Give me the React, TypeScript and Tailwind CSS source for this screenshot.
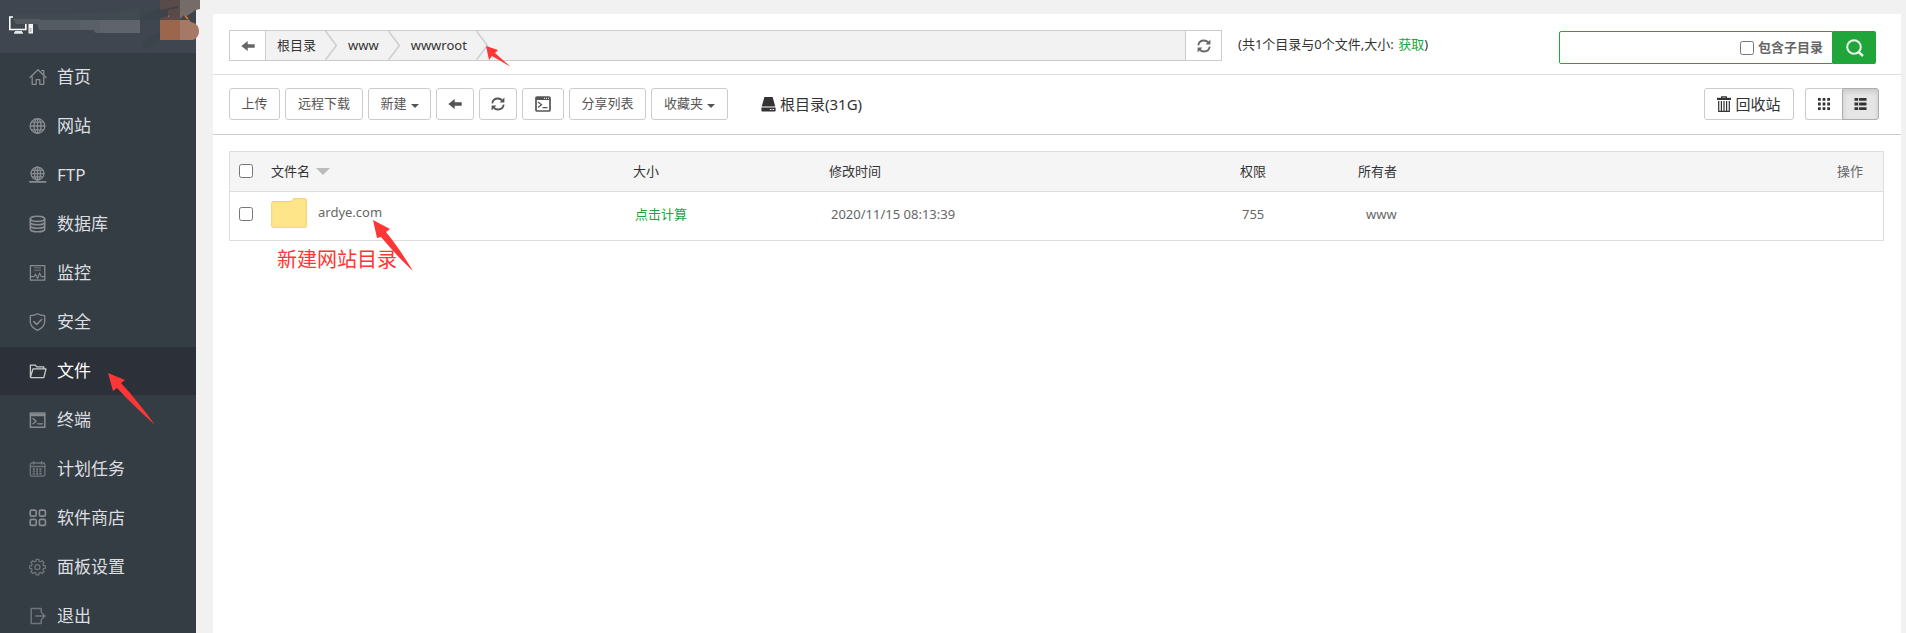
import React from "react";

const FONT = "font-['Noto_Sans','Noto_Sans_CJK_SC',sans-serif]";

type IconProps = { className?: string };

const line = {
  fill: "none",
  stroke: "currentColor",
  strokeWidth: 1.3,
  strokeLinecap: "round" as const,
  strokeLinejoin: "round" as const,
};

const menu: { label: string; dim?: boolean; active?: boolean; icon: React.ReactNode }[] = [
  {
    label: "首页",
    icon: <path {...line} d="M1 9.5 9 1.8l8 7.7M3.2 9v7.3h4v-4.6h3.6v4.6h4V9M12.6 2.6h2.2v3.6" />,
  },
  {
    label: "网站",
    icon: (
      <g {...line}>
        <circle cx="8.5" cy="9" r="7.3" />
        <ellipse cx="8.5" cy="9" rx="3.5" ry="7.3" />
        <path d="M8.5 1.7v14.6M1.2 9h14.6M2.4 5.2h12.2M2.4 12.8h12.2" />
      </g>
    ),
  },
  {
    label: "FTP",
    icon: (
      <g {...line}>
        <circle cx="8.5" cy="7.6" r="6.4" />
        <ellipse cx="8.5" cy="7.6" rx="3" ry="6.4" />
        <path d="M8.5 1.2V14M2 7.6h13M3.4 4.4h10.2M3.4 10.8h10.2" />
        <path strokeWidth="1.8" d="M.8 15.8h15.8M6.5 15.8h4" />
      </g>
    ),
  },
  {
    label: "数据库",
    icon: (
      <g {...line} strokeWidth="1.6">
        <ellipse cx="8.5" cy="3.8" rx="7.2" ry="2.6" />
        <path d="M1.3 3.8v10.4c0 1.4 3.2 2.6 7.2 2.6s7.2-1.2 7.2-2.6V3.8M1.3 7.2c0 1.4 3.2 2.6 7.2 2.6s7.2-1.2 7.2-2.6M1.3 10.7c0 1.4 3.2 2.6 7.2 2.6s7.2-1.2 7.2-2.6" />
      </g>
    ),
  },
  {
    label: "监控",
    icon: (
      <g {...line}>
        <path d="M1.4 1.6h14.4v14.6H1.4z" />
        <path strokeWidth="1.1" d="M1.5 12.6H5l1.6-2.4 2 4.4 2-5.6 1.6 3.6h3.4" />
        <path strokeWidth="1" opacity=".5" d="M5.500 3.500h6M5.500 5h6M5.500 6.500h6" />
      </g>
    ),
  },
  {
    label: "安全",
    icon: (
      <g {...line}>
        <path d="M8.5.8c2.2 1.4 4.6 1.9 7.2 1.9v6.1c0 4-2.8 6.6-7.2 8.6-4.4-2-7.2-4.6-7.2-8.6V2.7C3.9 2.7 6.3 2.2 8.5.8z" />
        <path strokeWidth="1.6" d="m4.8 8.7 2.9 2.800 4.900-5" />
      </g>
    ),
  },
  {
    label: "文件",
    active: true,
    icon: <path {...line} d="M1.400 15.200V3.200h5l1.400 1.700h7v2M1.400 15.200 4 6.900h13l-2.200 8.700H1.800" />,
  },
  {
    label: "终端",
    icon: (
      <g {...line}>
        <path strokeWidth="1.500" d="M1.400 2h14.400v14.200H1.400z" />
        <path d="M1.400 3.300h14.400M1.400 4.600h14.400M4 7.500l3.200 2.700L4 12.800M8.600 12.800h4.800" />
      </g>
    ),
  },
  {
    label: "计划任务",
    dim: true,
    icon: (
      <g {...line}>
        <rect x="1.300" y="3" width="14.600" height="13.200" rx="1.600" />
        <path d="M1.300 6.500h14.600M4.600 1.600v2.600M12.600 1.600v2.600" />
        <path strokeDasharray="2 1.300" strokeLinecap="butt" strokeWidth="1.800" d="M3.800 9.200h9.800M3.800 11.500h9.800M3.800 13.800h9.800" />
      </g>
    ),
  },
  {
    label: "软件商店",
    icon: (
      <g {...line} strokeWidth="1.700">
        <rect x="1.200" y="1.200" width="6" height="6" rx="1.500" />
        <rect x="10.400" y="1.200" width="6" height="6" rx="1.500" />
        <rect x="1.200" y="10.400" width="6" height="6" rx="1.500" />
        <rect x="10.400" y="10.400" width="6" height="6" rx="1.500" />
      </g>
    ),
  },
  {
    label: "面板设置",
    dim: true,
    icon: (
      <g {...line}>
        <path d="M7.200 1.300h2.600l.4 2 1.300.5 1.700-1.100 1.800 1.800-1.100 1.700.5 1.300 2 .4v2.400l-2 .4-.5 1.300 1.100 1.700-1.800 1.800-1.700-1.100-1.300.5-.4 2H7.200l-.4-2-1.300-.5-1.700 1.100L2 13.700 3.100 12l-.5-1.300-2-.4V7.900l2-.4.5-1.300L2 4.500l1.800-1.800 1.700 1.100 1.300-.5z" />
        <circle cx="8.500" cy="9.100" r="2.500" />
      </g>
    ),
  },
  {
    label: "退出",
    dim: true,
    icon: <path {...line} strokeWidth="1.500" d="M12.200 5V1.600H2.200v14.800h10V13M6.800 9h9M12.800 6l3.200 3-3.200 3" />,
  },
];

function ArrowLeft({ className }: IconProps) {
  return (
    <svg viewBox="0 0 14 12" className={className} aria-hidden="true">
      <path fill="currentColor" d="M.3 6 6.700 1v3.200h7v3.600h-7V11z" />
    </svg>
  );
}

function Refresh({ className }: IconProps) {
  return (
    <svg viewBox="0 0 14 14" className={className} aria-hidden="true">
      <path fill="none" stroke="currentColor" strokeWidth="1.800" d="M1.300 6.300C1.700 3.300 4.200 1.500 7 1.500c1.700 0 3.200.7 4.200 1.900M12.700 7.700c-.4 3-2.900 4.800-5.700 4.800-1.700 0-3.200-.7-4.200-1.900" />
      <path fill="currentColor" d="M13.400.6v5H8.600zM.6 13.400v-5h4.800z" />
    </svg>
  );
}

function Terminal({ className }: IconProps) {
  return (
    <svg viewBox="0 0 16 16" className={className} aria-hidden="true">
      <rect x="1" y="1" width="14" height="14" rx="1" fill="none" stroke="currentColor" strokeWidth="1.700" />
      <path fill="currentColor" d="M1 1h14v3H1z" />
      <path fill="none" stroke="#fff" strokeDasharray="1 1" d="M9 2.300h5" />
      <path fill="none" stroke="currentColor" strokeWidth="1.300" d="m3 6 3.500 2.700L3 11.400M7.500 11.600h5" />
    </svg>
  );
}

function Disk({ className }: IconProps) {
  return (
    <svg viewBox="0 0 16 16" className={className} aria-hidden="true">
      <path fill="currentColor" d="M3.600 0h8.800l2.800 10.200H.8zM.4 11.200h15.200v3.300c0 .6-.4 1-1 1H1.400c-.6 0-1-.4-1-1z" />
      <path fill="#fff" d="M9.500 12.800h1.600v1H9.500zM12.200 12.800h1.800v1h-1.800z" />
    </svg>
  );
}

function Trash({ className }: IconProps) {
  return (
    <svg viewBox="0 0 14 16" className={className} aria-hidden="true">
      <path fill="none" stroke="currentColor" strokeWidth="1.300" d="M4.700 2V.8h4.600V2" />
      <path fill="currentColor" d="M0 1.800h14v2.200H0z" />
      <path fill="none" stroke="currentColor" strokeWidth="1.200" d="M1.700 5v10.300h10.600V5M4.400 5v10M7 5v10M9.600 5v10" />
    </svg>
  );
}

function Grid({ className }: IconProps) {
  return (
    <svg viewBox="0 0 13 13" className={className} aria-hidden="true">
      <path
        fill="currentColor"
        d="M0 0h3v3H0zM5 0h3v3H5zM10 0h3v3h-3zM0 5h3v3H0zM5 5h3v3H5zM10 5h3v3h-3zM0 10h3v3H0zM5 10h3v3H5zM10 10h3v3h-3z"
      />
    </svg>
  );
}

function ListIcon({ className }: IconProps) {
  return (
    <svg viewBox="0 0 13 13" className={className} aria-hidden="true">
      <path fill="currentColor" d="M0 0h4v3H0zM5 0h8v3H5zM0 5h4v3H0zM5 5h8v3H5zM0 10h4v3H0zM5 10h8v3H5z" />
    </svg>
  );
}

function Chevron() {
  return (
    <svg viewBox="0 0 12 29" className="h-[29px] w-3 shrink-0" aria-hidden="true">
      <path fill="none" stroke="#cfcfd6" strokeWidth="1.600" d="M.5 0 11.300 14.500.5 29" />
    </svg>
  );
}

function Caret() {
  return (
    <svg viewBox="0 0 8 4" className="mt-1 h-1 w-2" aria-hidden="true">
      <path fill="currentColor" d="M0 0h8L4 4z" />
    </svg>
  );
}

function ToolButton({ label, width, children }: { label?: string; width: string; children: React.ReactNode }) {
  return (
    <button
      type="button"
      aria-label={label}
      className={`flex h-8 items-center justify-center gap-1 rounded-[3px] border border-[#ccc] bg-white text-[13px] text-[#555] ${width}`}
    >
      {children}
    </button>
  );
}

function Brand() {
  return (
    <header className="h-[53px] shrink-0 bg-[#3f464f]">
      <svg viewBox="0 0 200 53" className="block h-[53px] w-[200px]" aria-hidden="true">
        <path fill="none" stroke="#fff" strokeWidth="1.600" d="M13 17H9.800v12.500h16V24" />
        <path fill="#e6e7e8" d="M15 31h7v1.500h-7zM14 32.300h9v1.500h-9z" />
        <path fill="#f4f4f4" d="M28.500 24h4.500v9.500h-4.500z" />
        <path fill="#b9bcbf" d="M29.500 28h2v4h-2z" />
        <path fill="#414951" d="M13 14h25l82-2 20-6v14H20l-7-1z" />
        <path fill="#535a61" d="M13 19h27v5H16z" />
        <path fill="#555b63" d="M36 20h44v10H39z" />
        <path fill="#5a6068" d="M80 20h20v13h-4l-3-3H80z" />
        <path fill="#5f646c" d="M100 20h40v13h-40z" />
        <path fill="#3b434b" d="m140 16 20-8v32l-14 9-4-4 3-5 15-8V20h-20z" />
        <path fill="#594b4a" d="M160 0h20v20h-20z" />
        <path fill="#3f4348" d="m160 10 18-4v2l-10 2v6l-8 2z" />
        <path fill="#756b69" d="M180 0h20v9l-4 1-6 4-3 2-3-1-4 4z" />
        <path fill="#3c444c" d="m187 16 9-6v12h-7z" />
        <path fill="#9c664c" d="M160 20h20v20h-20z" />
        <path fill="#a67866" d="M180 20h9l2 2c5 1 8 4 8 9s-3 8-6 9h-13z" />
        <path fill="#f26a20" d="M184 15c2 0 4 2 5 5-3-1-4-3-5-5zM168 15.500h1v1.200h-1z" />
      </svg>
    </header>
  );
}

function Sidebar() {
  return (
    <aside className="relative z-10 flex w-[196px] shrink-0 flex-col bg-[#353d44]">
      <Brand />
      <nav className="min-h-0 flex-1 overflow-hidden">
        <ul className="flex flex-col gap-px">
          {menu.map((item) => (
            <li key={item.label}>
              <a
                href="#"
                className={`flex h-12 items-center gap-[10px] pl-[29px] text-[17px] ${item.active ? "bg-[#2c3038] text-white" : "text-[#dcdfe1]"}`}
              >
                <svg
                  viewBox="0 0 18 18"
                  className={`size-[18px] ${item.active ? "text-[#c9cbcd]" : item.dim ? "text-[#70757a]" : "text-[#888c90]"}`}
                  aria-hidden="true"
                >
                  {item.icon}
                </svg>
                {item.label}
              </a>
            </li>
          ))}
        </ul>
      </nav>
      <svg viewBox="0 0 48 54" className="absolute left-[108px] top-[372px] h-[54px] w-12" aria-hidden="true">
        <path fill="#ff3636" d="m0 1 17 7-4 3c12 13 24 28 34 42-12-11-26-24-38-37l-4 3z" />
      </svg>
    </aside>
  );
}

function PathBar() {
  return (
    <div className="flex items-start border-b border-[#ddd] pb-[10px] pl-4 pr-[25px] pt-4">
      <div className="flex h-[31px] w-[993px] border border-[#ccc] bg-[#f2f2f2] text-[13px] text-[#333]">
        <button type="button" aria-label="后退" className="flex w-9 items-center justify-center border-r border-[#ccc] bg-white text-[#666]">
          <ArrowLeft className="h-3 w-[14px]" />
        </button>
        <nav className="relative flex flex-1 items-center">
          <a href="#" className="pl-[11px] pr-[9px]">根目录</a>
          <Chevron />
          <a href="#" className="pl-[11px] pr-[9px]">www</a>
          <Chevron />
          <a href="#" className="pl-[11px] pr-[9px]">wwwroot</a>
          <span className="relative">
            <Chevron />
            <svg viewBox="0 0 26 22" className="absolute left-[10px] top-[15px] h-[22px] w-[26px]" aria-hidden="true">
              <path fill="#ff3636" d="m0 0 12 4-3 3 16 14L6 10l-3 4z" />
            </svg>
          </span>
        </nav>
        <button type="button" aria-label="刷新" className="flex w-9 items-center justify-center border-l border-[#ccc] bg-white text-[#666]">
          <Refresh className="size-[14px]" />
        </button>
      </div>
      <p className="pl-4 text-[13px] leading-7 text-[#333]">
        (共1个目录与0个文件,大小: <a href="#" className="ml-px text-[#20a53a]">获取</a>)
      </p>
      <form className="ml-auto mt-px flex h-[33px] w-[317px]">
        <div className="flex min-w-0 flex-1 items-center rounded-l-[2px] border border-[#20a53a] pr-[9px]">
          <input type="text" aria-label="搜索" className="h-full min-w-0 flex-1 px-2 text-[13px] outline-none" />
          <label className="flex items-center gap-1 text-[13px] font-bold text-[#666]">
            <input type="checkbox" className="size-[14px]" />
            包含子目录
          </label>
        </div>
        <button type="button" aria-label="查找" className="flex w-[43px] items-center justify-center rounded-r-[2px] bg-[#20a53a]">
          <svg viewBox="0 0 20 20" className="size-5" aria-hidden="true">
            <circle cx="9" cy="9" r="6.800" fill="none" stroke="#e9f6eb" strokeWidth="2" />
            <path stroke="#e9f6eb" strokeWidth="2.400" d="m13.500 14 4.500 4" />
          </svg>
        </button>
      </form>
    </div>
  );
}

function Toolbar() {
  return (
    <div className="flex items-center gap-[5px] border-b border-[#ccc] pb-[14px] pl-4 pr-[22px] pt-[13px]">
      <ToolButton width="w-[51px]">上传</ToolButton>
      <ToolButton width="w-[78px]">远程下载</ToolButton>
      <ToolButton width="w-[63px]">
        新建
        <Caret />
      </ToolButton>
      <ToolButton width="w-[38px]" label="后退">
        <ArrowLeft className="h-3 w-[14px]" />
      </ToolButton>
      <ToolButton width="w-[38px]" label="刷新">
        <Refresh className="size-[14px]" />
      </ToolButton>
      <ToolButton width="w-[42px]" label="终端">
        <Terminal className="size-4" />
      </ToolButton>
      <ToolButton width="w-[77px]">分享列表</ToolButton>
      <ToolButton width="w-[77px]">
        收藏夹
        <Caret />
      </ToolButton>
      <a href="#" className="ml-7 flex items-center gap-1 text-[15px] text-[#333]">
        <Disk className="size-[15px]" />
        根目录(31G)
      </a>
      <button
        type="button"
        className="ml-auto flex h-8 w-[90px] items-center justify-center gap-1 rounded-[3px] border border-[#ccc] text-[15px] text-[#333]"
      >
        <Trash className="h-4 w-[14px]" />
        回收站
      </button>
      <div className="ml-[6px] flex h-8 text-[#333]">
        <button type="button" aria-label="图标视图" className="flex w-[37px] items-center justify-center rounded-l-[3px] border border-r-0 border-[#ccc]">
          <Grid className="size-3" />
        </button>
        <button
          type="button"
          aria-label="列表视图"
          className="flex w-[37px] items-center justify-center rounded-r-[3px] border border-[#adadad] bg-[#e6e6e6] shadow-[inset_0_3px_5px_rgba(0,0,0,0.125)]"
        >
          <ListIcon className="h-3 w-[13px]" />
        </button>
      </div>
    </div>
  );
}

function FileTable() {
  return (
    <div className="pl-4 pr-[17px] pt-4">
      <div className="relative border border-[#ddd]">
        <table className="w-full table-fixed border-collapse text-left text-[13px] text-[#666]">
          <colgroup>
            <col className="w-[33px]" />
            <col className="w-[362px]" />
            <col className="w-[196px]" />
            <col className="w-[411px]" />
            <col className="w-[118px]" />
            <col />
            <col className="w-[100px]" />
          </colgroup>
          <thead>
            <tr className="h-[39px] border-b border-[#ddd] bg-[#f5f5f5] text-[#333]">
              <th className="pl-[9px]">
                <input type="checkbox" aria-label="全选" className="block size-[14px]" />
              </th>
              <th className="pl-2 font-normal">
                <span className="flex items-center gap-[6px]">
                  文件名
                  <svg viewBox="0 0 14 7" className="h-[7px] w-[14px]" aria-hidden="true">
                    <path fill="#bbb" d="M0 0h14L7 7z" />
                  </svg>
                </span>
              </th>
              <th className="pl-2 font-normal">大小</th>
              <th className="pl-2 font-normal">修改时间</th>
              <th className="pl-2 font-normal">权限</th>
              <th className="pl-2 font-normal">所有者</th>
              <th className="pr-5 text-right font-normal text-[#666]">操作</th>
            </tr>
          </thead>
          <tbody>
            <tr className="h-[49px] align-top">
              <td className="pl-[9px] pt-[15px]">
                <input type="checkbox" aria-label="ardye.com" className="block size-[14px]" />
              </td>
              <td className="pl-2 pt-[6px]">
                <a href="#" className="flex items-center gap-[11px]">
                  <svg viewBox="0 0 36 30" className="h-[30px] w-9" aria-hidden="true">
                    <path fill="#ffe58a" stroke="#f3cf6b" d="M2 3.500h18.500L22.500.7H34c.8 0 1.300.5 1.300 1.300v26c0 .8-.5 1.300-1.300 1.300H2c-.8 0-1.300-.5-1.300-1.300V5C.7 4 1.200 3.500 2 3.500z" />
                  </svg>
                  ardye.com
                </a>
              </td>
              <td className="pl-[10px] pt-3 leading-5">
                <a href="#" className="text-[#20a53a]">点击计算</a>
              </td>
              <td className="pl-[10px] pt-3 leading-5">2020/11/15 08:13:39</td>
              <td className="pl-[10px] pt-3 leading-5">755</td>
              <td className="pl-4 pt-3 leading-5">www</td>
              <td />
            </tr>
          </tbody>
        </table>
        <p className="absolute left-[47px] top-[94px] text-[20px] leading-7 text-[#ff3636]">新建网站目录</p>
        <svg viewBox="0 0 40 52" className="absolute left-[143px] top-[68px] h-[52px] w-10" aria-hidden="true">
          <path fill="#ff3636" d="m0 0 17 9-4 3c10 12 19 26 27 39C29 41 18 29 8 17l-4 1z" />
        </svg>
      </div>
    </div>
  );
}

export default function App() {
  return (
    <div className={`flex h-screen overflow-hidden bg-[#f1f1f1] ${FONT}`}>
      <Sidebar />
      <main className="flex min-w-0 flex-1 pl-[17px] pr-[5px] pt-[14px]">
        <div className="min-w-0 flex-1 bg-white">
          <PathBar />
          <Toolbar />
          <FileTable />
        </div>
      </main>
    </div>
  );
}
